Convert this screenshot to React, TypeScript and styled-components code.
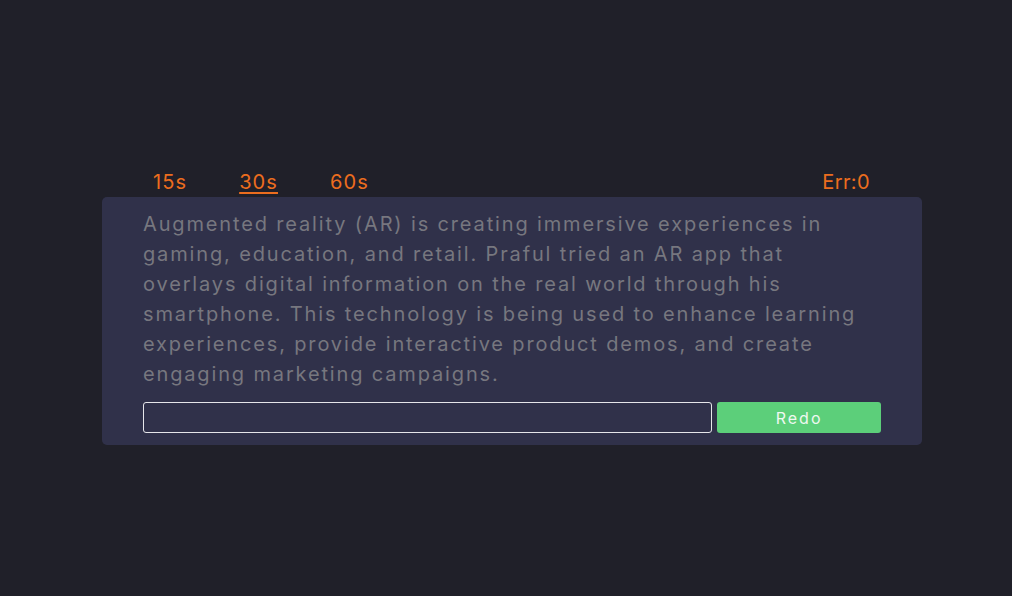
import React from "react";
import styled, { createGlobalStyle } from "styled-components";

const Global = createGlobalStyle`
  html, body { margin: 0; padding: 0; background: #202029; }
  body { font-family: Inter, "Open Sans", sans-serif; }
`;

const Page = styled.div`
  width: 1012px;
  height: 596px;
  display: flex;
  flex-direction: column;
  align-items: center;
  padding: 167px 0 0 12px;
  box-sizing: border-box;
`;

const Wrap = styled.div`
  width: 820px;
  display: flex;
  flex-direction: column;
`;

const Header = styled.div`
  height: 30px;
  display: flex;
  align-items: center;
  padding: 0 52px 0 51px;
  color: #ec6d1e;
  font-size: 20px;
  letter-spacing: 1.1px;
`;

const Tabs = styled.div`
  display: flex;
  gap: 52px;
  flex: 1;
`;

const Tab = styled.span<{ $active?: boolean }>`
  text-decoration: ${(p) => (p.$active ? "underline" : "none")};
  text-underline-offset: 3px;
  text-decoration-thickness: 2px;
  cursor: pointer;
`;

const Errors = styled.span`
  letter-spacing: 0.4px;
`;

const Card = styled.div`
  background: #30314a;
  border-radius: 5px;
  padding: 12px 41px 12px 41px;
  display: flex;
  flex-direction: column;
`;

const Text = styled.div`
  color: #77777f;
  font-size: 20px;
  line-height: 30px;
  letter-spacing: 1.85px;
  white-space: nowrap;
`;

const Row = styled.div`
  display: flex;
  gap: 5px;
  margin-top: 13px;
`;

const Input = styled.input`
  width: 570px;
  height: 31px;
  box-sizing: border-box;
  background: transparent;
  border: 1px solid #e6e6ea;
  border-radius: 3px;
  outline: none;
  color: #ddd;
  font-family: inherit;
  font-size: 16px;
  padding: 0 8px;
`;

const Button = styled.button`
  width: 164px;
  height: 31px;
  background: #5ccf7a;
  border: none;
  border-radius: 3px;
  color: #eef8f0;
  font-family: inherit;
  font-size: 16px;
  letter-spacing: 2px;
`;

const lines = [
  "Augmented reality (AR) is creating immersive experiences in",
  "gaming, education, and retail. Praful tried an AR app that",
  "overlays digital information on the real world through his",
  "smartphone. This technology is being used to enhance learning",
  "experiences, provide interactive product demos, and create",
  "engaging marketing campaigns.",
];

export default function App() {
  return (
    <>
      <Global />
      <Page>
        <Wrap>
          <Header>
            <Tabs>
              <Tab>15s</Tab>
              <Tab $active>30s</Tab>
              <Tab>60s</Tab>
            </Tabs>
            <Errors>Err:0</Errors>
          </Header>
          <Card>
            <Text>
              {lines.map((l, i) => (
                <React.Fragment key={i}>
                  {l}
                  {i < lines.length - 1 && <br />}
                </React.Fragment>
              ))}
            </Text>
            <Row>
              <Input />
              <Button>Redo</Button>
            </Row>
          </Card>
        </Wrap>
      </Page>
    </>
  );
}
